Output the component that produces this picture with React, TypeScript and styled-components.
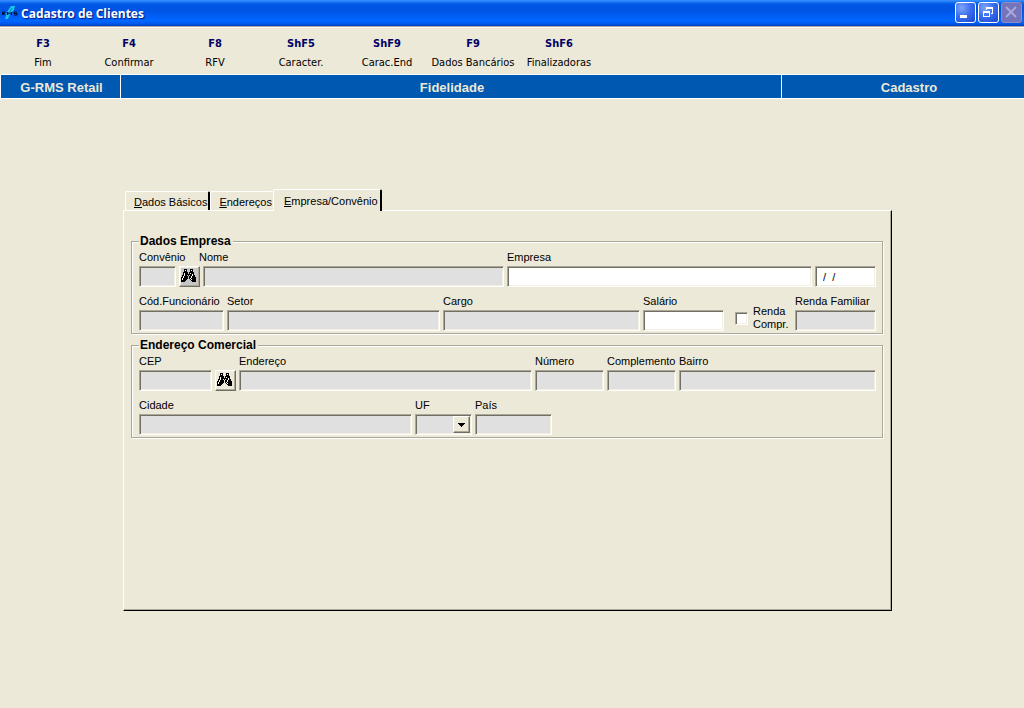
import React from "react";
import styled, { createGlobalStyle } from "styled-components";

const face = "#ece9d8";
const shade = "#aca899";
const dark = "#716f64";
const sans = '"Liberation Sans", Arial, sans-serif';
const tahoma = '"DejaVu Sans Condensed", "DejaVu Sans", sans-serif';

const GlobalStyle = createGlobalStyle`
  *, *::before, *::after { box-sizing: border-box; }
  body { margin: 0; background: ${face}; font: 11px/16px ${sans}; color: #000; }
  button, input, select { font: inherit; color: inherit; margin: 0; border-radius: 0; }
`;

const Page = styled.div`
  min-height: 100vh;
  background: ${face};
`;

const TitleBar = styled.header`
  display: flex;
  align-items: center;
  height: 26px;
  padding: 0 2px 1px;
  gap: 3px;
  background: linear-gradient(#3a93ff 0, #1c76f5 2px, #0058e6 4px, #0054e3 10px, #005cf5 15px, #0068ff 21px, #0055ea 24px, #003dc0 26px);
`;

const Title = styled.h1`
  flex: 1;
  margin: 0;
  padding-top: 2px;
  font: bold 12px/18px "Open Sans", "Noto Sans", sans-serif;
  color: #fff;
  text-shadow: 1px 1px 1px #0a1883;
`;

const WindowButtons = styled.div`
  display: flex;
  gap: 2px;
`;

const WindowButton = styled.button`
  display: grid;
  place-items: center;
  width: 21px;
  height: 21px;
  padding: 0;
  border: 1px solid #fff;
  border-radius: 3px;
  background: radial-gradient(circle at 30% 25%, #7fa6f8, #3b6ff0 45%, #1846cf);
  &:disabled { background: #7574bb; border-color: #8f8cc4; }
`;

const Toolbar = styled.nav`
  display: flex;
  height: 49px;
  padding-top: 9px;
  border-top: 1px solid ${shade};
  border-bottom: 1px solid #fff;
  box-shadow: inset 0 1px #fff;
`;

const Command = styled.button`
  display: flex;
  flex-direction: column;
  align-items: center;
  gap: 3px;
  width: 86px;
  padding: 0;
  border: 0;
  background: none;
  font: 11px/16px ${tahoma};
  white-space: nowrap;
`;

const KeyName = styled.strong`
  color: #000066;
`;

const Banner = styled.div`
  display: grid;
  grid-template-columns: 121px minmax(0, 661fr) minmax(0, 242fr);
  height: 24px;
  border-bottom: 1px solid #fff;
  background: #0058b0;
`;

const BannerCell = styled.div`
  padding-left: 2px;
  border-right: 1px solid #fff;
  font: bold 13px/25px ${sans};
  text-align: center;
  color: ${face};
  &:first-child { border-left: 1px solid #fff; }
  &:last-child { border-right: 0; padding-left: 12px; }
`;

const Main = styled.main`
  padding: 90px 132px 24px 123px;
`;

const Tabs = styled.div`
  display: flex;
  align-items: flex-end;
  height: 21px;
  padding-left: 2px;
`;

const Tab = styled.button<{ $active?: boolean; $edge?: boolean }>`
  position: relative;
  height: ${(p) => (p.$active ? 22 : 19)}px;
  margin-bottom: ${(p) => (p.$active ? -1 : 0)}px;
  padding: 0 ${(p) => (p.$active ? 2 : 1)}px 0 ${(p) => (p.$active ? 10 : 8)}px;
  border: 1px solid #fff;
  border-right: ${(p) => (p.$active || p.$edge ? "2px solid #000" : "0")};
  border-bottom: 0;
  border-radius: 2px 2px 0 0;
  background: ${face};
  line-height: 20px;
  white-space: nowrap;
`;

const Panel = styled.section`
  min-height: 401px;
  padding: 23px 8px 23px 7px;
  border: 1px solid #fff;
  border-right-color: #000;
  border-bottom-color: #000;
  box-shadow: inset -1px -1px ${shade};
`;

const Group = styled.fieldset`
  display: flex;
  flex-direction: column;
  gap: 7px;
  min-width: 0;
  margin: 0 0 4px;
  padding: 2px 6px 2px 7px;
  border: 1px solid ${shade};
  box-shadow: inset 1px 1px #fff, 1px 1px #fff;
`;

const Legend = styled.legend`
  padding: 0 2px 0 1px;
  background: ${face};
  font: bold 12px/14px ${sans};
`;

const Row = styled.div`
  display: flex;
  align-items: flex-end;
  gap: 3px;
`;

const Cell = styled.div<{ $w: number; $grow?: boolean }>`
  display: flex;
  flex-direction: column;
  flex: ${(p) => (p.$grow ? `${p.$w} 1 0` : `0 0 ${p.$w}px`)};
  min-width: 0;
`;

const Label = styled.label`
  height: 16px;
  line-height: 14px;
  white-space: nowrap;
`;

const sunken = `
  border: 1px solid;
  border-color: ${shade} #fff #fff ${shade};
  box-shadow: inset 1px 1px ${dark}, inset -1px -1px #f1efe2;
`;

const Input = styled.input<{ $open?: boolean }>`
  width: 100%;
  height: 21px;
  padding: 0 7px;
  outline: 0;
  white-space: pre;
  background: ${(p) => (p.$open ? "#fff" : "#e0e0e0")};
  ${sunken}
`;

const LookupGrid = styled.div`
  display: grid;
  grid-template-columns: 40px 20px 4px minmax(0, 1fr);
  flex: 365 1 0;
  min-width: 0;
`;

const LookupLabel = styled(Label)<{ $col: string }>`
  grid-column: ${(p) => p.$col};
`;

const CodeSlot = styled.div`
  width: 37px;
`;

const ButtonSlot = styled.div`
  grid-column: 2 / 4;
`;

const FindButton = styled.button<{ $gray?: boolean }>`
  display: grid;
  place-items: center;
  flex: 0 0 21px;
  width: 21px;
  height: 21px;
  padding: 0 2px 2px 0;
  border: 1px solid;
  border-color: #fff ${dark} ${dark} #fff;
  box-shadow: inset -1px -1px ${shade}, inset 1px 1px #f1efe2;
  background: ${(p) => (p.$gray ? "#c6c6c6" : face)};
`;

const Check = styled.label`
  display: flex;
  align-items: center;
  flex: 0 0 57px;
  gap: 5px;
  height: 26px;
  margin-left: 8px;
  line-height: 13px;
`;

const CheckBox = styled.input`
  appearance: none;
  flex: none;
  width: 13px;
  height: 13px;
  background: #fff;
  ${sunken}
`;

const SelectBox = styled.div`
  position: relative;
`;

const Select = styled.select`
  appearance: none;
  display: block;
  width: 100%;
  height: 21px;
  padding: 0 20px 0 4px;
  background: #e0e0e0;
  ${sunken}
`;

const Arrow = styled.span`
  position: absolute;
  top: 2px;
  right: 2px;
  display: grid;
  place-items: center;
  width: 17px;
  height: 17px;
  border: 1px solid;
  border-color: #fff ${dark} ${dark} #fff;
  box-shadow: inset -1px -1px ${shade};
  background: ${face};
  pointer-events: none;
`;

const binocularRows = [
  "...###...###...",
  "...#o#...#o#...",
  "...###...###...",
  "..#####.#####..",
  "..#o###.#o###..",
  "..#o#######o#..",
  ".##o##.#.##o##.",
  ".#o####.##o###.",
  "##o####.##o####",
  "#o#####.#o#####",
  "#o####...#o####",
  "#####.....#####",
  "####.......####",
];

const Pixels = ({ rows, color = "#000" }: { rows: string[]; color?: string }) => (
  <svg width={rows[0].length} height={rows.length} shapeRendering="crispEdges" aria-hidden="true">
    {rows.flatMap((r, y) =>
      [...r].map((c, x) =>
        c === "." ? null : <rect key={`${x}-${y}`} x={x} y={y} width="1" height="1" fill={c === "o" ? "#fff" : color} />
      )
    )}
  </svg>
);

const Logo = () => (
  <svg width="16" height="16" viewBox="0 0 16 16" aria-hidden="true">
    <path d="M9 1 L13 1 L12 5 L8 9 L6 14 L3 14 L5 7 Z" fill="#18c8e8" />
    <path d="M10 3 L6 10" stroke="#0878c0" fill="none" />
    <path d="M.5 10V7h2v1.500h-2l2 1.500M5.500 10V7l2 2 2-2v3M15 7h-3v1.500h3V10h-3" stroke="#001030" fill="none" />
  </svg>
);

const Field = ({ id, label, w, grow, open, value }: { id: string; label?: string; w: number; grow?: boolean; open?: boolean; value?: string }) => (
  <Cell $w={w} $grow={grow}>
    {label && <Label htmlFor={id}>{label}</Label>}
    <Input id={id} $open={open} defaultValue={value} aria-label={label ? undefined : "Data"} />
  </Cell>
);

const commands = [
  ["F3", "Fim"],
  ["F4", "Confirmar"],
  ["F8", "RFV"],
  ["ShF5", "Caracter."],
  ["ShF9", "Carac.End"],
  ["F9", "Dados Bancários"],
  ["ShF6", "Finalizadoras"],
];

export default function App() {
  return (
    <Page>
      <GlobalStyle />
      <TitleBar>
        <Logo />
        <Title>Cadastro de Clientes</Title>
        <WindowButtons>
          <WindowButton aria-label="Minimizar">
            <svg width="19" height="19" aria-hidden="true"><path d="M4 12h7v3H4z" fill="#fff" /></svg>
          </WindowButton>
          <WindowButton aria-label="Restaurar">
            <svg width="19" height="19" shapeRendering="crispEdges" aria-hidden="true">
              <path d="M7 4h7v2H7zM13 6h1v4h-1zM12 10h2v1h-2zM7 6h1v1H7zM4 8h7v2H4zM4 10h1v4H4zM10 10h1v4h-1zM4 13h7v1H4z" fill="#fff" />
            </svg>
          </WindowButton>
          <WindowButton aria-label="Fechar" disabled>
            <svg width="19" height="19" aria-hidden="true"><path d="M4 4l10 10M14 4l-10 10" stroke="#aaa9dc" strokeWidth="2" /></svg>
          </WindowButton>
        </WindowButtons>
      </TitleBar>
      <Toolbar>
        {commands.map(([k, text]) => (
          <Command key={k}>
            <KeyName>{k}</KeyName>
            <span>{text}</span>
          </Command>
        ))}
      </Toolbar>
      <Banner>
        <BannerCell>G-RMS Retail</BannerCell>
        <BannerCell>Fidelidade</BannerCell>
        <BannerCell>Cadastro</BannerCell>
      </Banner>
      <Main>
        <Tabs role="tablist">
          <Tab role="tab" $edge><u>D</u>ados Básicos</Tab>
          <Tab role="tab"><u>E</u>ndereços</Tab>
          <Tab role="tab" aria-selected $active><u>E</u>mpresa/Convênio</Tab>
        </Tabs>
        <Panel role="tabpanel">
          <Group>
            <Legend>Dados Empresa</Legend>
            <Row>
              <LookupGrid>
                <LookupLabel htmlFor="convenio" $col="1 / 3">Convênio</LookupLabel>
                <LookupLabel htmlFor="nome" $col="3 / 5">Nome</LookupLabel>
                <CodeSlot><Input id="convenio" /></CodeSlot>
                <ButtonSlot>
                  <FindButton $gray aria-label="Procurar convênio"><Pixels rows={binocularRows} /></FindButton>
                </ButtonSlot>
                <Input id="nome" />
              </LookupGrid>
              <Field id="empresa" label="Empresa" w={305} grow open />
              <Field id="data" w={61} open value="/  /" />
            </Row>
            <Row>
              <Field id="cod" label="Cód.Funcionário" w={85} />
              <Field id="setor" label="Setor" w={213} grow />
              <Field id="cargo" label="Cargo" w={197} grow />
              <Field id="salario" label="Salário" w={81} open />
              <Check>
                <CheckBox type="checkbox" />
                <span>Renda Compr.</span>
              </Check>
              <Field id="renda" label="Renda Familiar" w={81} />
            </Row>
          </Group>
          <Group>
            <Legend>Endereço Comercial</Legend>
            <Row>
              <Field id="cep" label="CEP" w={73} />
              <FindButton aria-label="Procurar CEP"><Pixels rows={binocularRows} /></FindButton>
              <Field id="endereco" label="Endereço" w={293} grow />
              <Field id="numero" label="Número" w={69} />
              <Field id="complemento" label="Complemento" w={69} />
              <Field id="bairro" label="Bairro" w={197} grow />
            </Row>
            <Row>
              <Field id="cidade" label="Cidade" w={273} />
              <Cell $w={57}>
                <Label htmlFor="uf">UF</Label>
                <SelectBox>
                  <Select id="uf"><option></option></Select>
                  <Arrow><Pixels rows={["#######", ".#####.", "..###..", "...#..."]} /></Arrow>
                </SelectBox>
              </Cell>
              <Field id="pais" label="País" w={77} />
            </Row>
          </Group>
        </Panel>
      </Main>
    </Page>
  );
}
